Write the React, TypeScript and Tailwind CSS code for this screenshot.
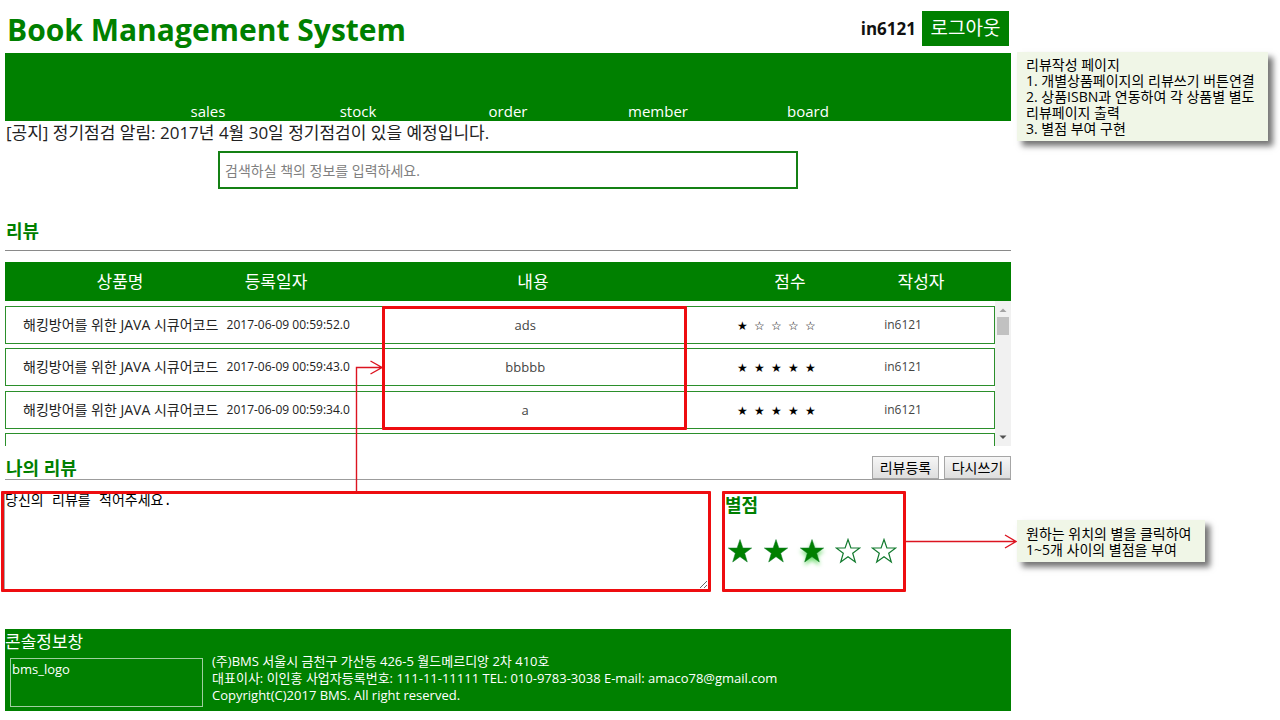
import { useState } from "react";
import type { ReactNode } from "react";

const menu = ["sales", "stock", "order", "member", "board"];
const columns = ["상품명", "등록일자", "내용", "점수", "작성자"];

type Review = { title: string; date: string; body: string; score: number; writer: string };

const reviews: Review[] = [
  { title: "해킹방어를 위한 JAVA 시큐어코드", date: "2017-06-09 00:59:52.0", body: "ads", score: 1, writer: "in6121" },
  { title: "해킹방어를 위한 JAVA 시큐어코드", date: "2017-06-09 00:59:43.0", body: "bbbbb", score: 5, writer: "in6121" },
  { title: "해킹방어를 위한 JAVA 시큐어코드", date: "2017-06-09 00:59:34.0", body: "a", score: 5, writer: "in6121" },
];

const filled = [1, 2, 3, 4, 5];

function Header() {
  return (
    <header className="flex h-[53px] items-start justify-between pr-[2px] pt-[11px]">
      <h1 className="pl-[2px] text-[30px] leading-[38px] font-bold text-[#008000]">Book Management System</h1>
      <div className="flex items-center gap-[6px]">
        <span className="text-[17px] font-bold text-[#111]">in6121</span>
        <button type="button" className="h-[35px] w-[87px] bg-[#008000] text-[19px] leading-[35px] text-white">
          로그아웃
        </button>
      </div>
    </header>
  );
}

function Menu() {
  return (
    <nav className="flex h-[68px] items-end justify-center bg-[#008000]">
      {menu.map((item) => (
        <a key={item} href={"#" + item} className="w-[150px] text-center text-[15px] leading-[20px] text-white">
          {item}
        </a>
      ))}
    </nav>
  );
}

function ScrollBar() {
  return (
    <div aria-hidden="true" className="absolute top-[39px] right-0 bottom-0 flex w-[16px] flex-col items-center bg-[#f1f1f1]">
      <svg width="8" height="16" viewBox="0 0 8 16" className="shrink-0">
        <path d="M0.5 11 4 7.5 7.5 11z" fill="#a3a3a3" />
      </svg>
      <div className="h-[18px] w-[12px] bg-[#c1c1c1]" />
      <svg width="8" height="16" viewBox="0 0 8 16" className="mt-auto shrink-0">
        <path d="M0.5 5.5h7L4 9z" fill="#505050" />
      </svg>
    </div>
  );
}

function ReviewTable() {
  return (
    <div className="relative mt-[11px]">
      <table className="block w-full">
        <thead className="block bg-[#008000]">
          <tr className="grid h-[39px] grid-cols-[160fr_152fr_362fr_152fr_110fr] items-center px-[35px]">
            {columns.map((name) => (
              <th key={name} className="text-center text-[17px] leading-[20px] font-normal text-white">
                {name}
              </th>
            ))}
          </tr>
        </thead>
        <tbody className="block h-[145px] overflow-hidden pt-[5px] pr-[16px]">
          {reviews.map((r) => (
            <tr
              key={r.date}
              className="grid h-[38px] grid-cols-[194fr_140fr_335fr_168fr_86fr] items-center border border-[#2b8f2b] pr-[48px] pl-[17px] text-[13px] leading-[18px] whitespace-nowrap text-[#222] odd:mb-[4px] even:mb-[5px]"
            >
              <td className="flex justify-center text-[14px]">{r.title}</td>
              <td className="flex justify-center text-[12px]">{r.date}</td>
              <td className="text-center text-[#444]">{r.body}</td>
              <td className="flex justify-center pt-[2px] text-[12px] text-black">
                {filled.map((n) => (
                  <span key={n} className="w-[17px] text-center font-['DejaVu_Sans',sans-serif]">
                    {n <= r.score ? "★" : "☆"}
                  </span>
                ))}
              </td>
              <td className="text-center text-[12px] text-[#444]">{r.writer}</td>
            </tr>
          ))}
          <tr className="grid h-[38px] border border-[#2b8f2b]">
            <td />
          </tr>
        </tbody>
      </table>
      <ScrollBar />
      <div className="pointer-events-none absolute top-[44px] left-[377px] h-[124px] w-[305px] rounded-[1px] border-3 border-[#ee0d10]" />
      <svg className="pointer-events-none absolute top-[98px] left-[350px]" width="28" height="134" viewBox="0 0 28 134" fill="none" stroke="#dc1420" strokeWidth="1.4" aria-hidden="true">
        <path d="M1.5 132V7.500H27M15.500 1 27 7.500 15.500 14" />
      </svg>
    </div>
  );
}

function Star({ on, glow }: { on: boolean; glow: boolean }) {
  return (
    <svg
      width="26"
      height="26"
      viewBox="0 0 26 26"
      aria-hidden="true"
      className={glow ? "drop-shadow-[0_3px_2px_#6fdc6f]" : ""}
    >
      <path
        d="M13 1.500 15.900 10H24.700L17.700 15.200 20.300 24 13 18.700 5.700 24 8.300 15.200 1.300 10H10.100Z"
        fill={on ? "#008000" : "none"}
        stroke="#127a2e"
        strokeWidth={on ? 0.5 : 1.2}
      />
    </svg>
  );
}

function Rating() {
  const [score, setScore] = useState(3);
  return (
    <section className="h-[101px] w-[184px] rounded-[1px] border-3 border-[#ee0d10]">
      <h2 className="text-[18px] leading-[22px] font-bold text-[#008000]">별점</h2>
      <div className="mt-[22px] flex gap-[10px] pl-[2px]">
        {filled.map((n) => (
          <button key={n} type="button" aria-label={n + "점"} onClick={() => setScore(n)} className="w-[26px] shrink-0">
            <Star on={n <= score} glow={n === score} />
          </button>
        ))}
      </div>
    </section>
  );
}

function GrayButton({ children }: { children: ReactNode }) {
  return (
    <button
      type="button"
      className="h-[23px] w-[67px] border border-[#a6a6a6] bg-linear-to-b from-[#f6f6f6] to-[#dedede] text-[14px] leading-[20px] text-black"
    >
      {children}
    </button>
  );
}

function MyReview() {
  return (
    <section>
      <div className="mt-[10px] flex h-[24px] items-start justify-between border-b border-[#9c9c9c]">
        <h2 className="pl-[1px] text-[18px] leading-[24px] font-bold text-[#008000]">
          <label htmlFor="my-review">나의 리뷰</label>
        </h2>
        <div className="flex gap-[5px]">
          <GrayButton>리뷰등록</GrayButton>
          <GrayButton>다시쓰기</GrayButton>
        </div>
      </div>
      <div className="-ml-[4px] mt-[11px] flex gap-[11px] pr-[105px]">
        <div className="h-[101px] flex-1 rounded-[1px] border-3 border-[#ee0d10]">
          <textarea
            id="my-review"
            defaultValue="당신의 리뷰를 적어주세요."
            className="block h-[95px] w-full resize border-l border-[#a9a9a9] font-['Liberation_Mono','Noto_Sans_CJK_KR',monospace] text-[14px] leading-[15px] text-black outline-none"
          />
        </div>
        <Rating />
      </div>
    </section>
  );
}

function Footer() {
  return (
    <footer className="mt-[37px] h-[82px] bg-[#008000] text-white">
      <p className="pt-[2px] text-[17px] leading-[22px]">콘솔정보창</p>
      <div className="flex gap-[9px] pt-[5px] pl-[5px]">
        <div className="h-[49px] w-[193px] shrink-0 border border-[#9fcf9f] pl-[1px] text-[13px] leading-[21px]">
          bms_logo
        </div>
        <address className="-mt-[5px] text-[13px] leading-[17px] whitespace-nowrap not-italic">
          (주)BMS 서울시 금천구 가산동 426-5 월드메르디앙 2차 410호
          <br />
          대표이사: 이인홍 사업자등록번호: 111-11-11111 TEL: 010-9783-3038 E-mail: amaco78@gmail.com
          <br />
          Copyright(C)2017 BMS. All right reserved.
        </address>
      </div>
    </footer>
  );
}

function Note({ children }: { children: ReactNode }) {
  return (
    <div className="bg-[#f0f6e7] px-[9px] text-[14px] leading-[16px] whitespace-nowrap text-black shadow-[5px_5px_6px_rgba(0,0,0,0.55)]">
      {children}
    </div>
  );
}

export default function App() {
  return (
    <div className="flex min-h-screen bg-white pl-[5px] font-['Open_Sans','Noto_Sans_CJK_KR',sans-serif]">
      <main className="min-w-0 flex-1">
        <Header />
        <Menu />
        <p className="pl-[1px] text-[17px] leading-[24px] text-[#222]">
          [공지] 정기점검 알림: 2017년 4월 30일 정기점검이 있을 예정입니다.
        </p>
        <div className="mt-[6px] flex justify-center">
          <input
            type="text"
            aria-label="도서 검색"
            placeholder="검색하실 책의 정보를 입력하세요."
            className="h-[38px] w-[580px] border-2 border-[#148014] px-[5px] text-[14px] outline-none placeholder:text-[#808080]"
          />
        </div>
        <h2 className="mt-[30px] border-b border-[#8a8a8a] pl-[1px] pb-[7px] text-[18px] leading-[24px] font-bold text-[#008000]">
          리뷰
        </h2>
        <ReviewTable />
        <MyReview />
        <Footer />
      </main>
      <aside className="flex w-[269px] shrink-0 flex-col items-start pt-[52px] pr-[12px] pl-[6px]">
        <div className="w-full">
          <Note>
            <div className="pt-[5px] pb-[4px]">
              리뷰작성 페이지
              <br />
              1. 개별상품페이지의 리뷰쓰기 버튼연결
              <br />
              2. 상품ISBN과 연동하여 각 상품별 별도
              <br />
              리뷰페이지 출력
              <br />
              3. 별점 부여 구현
            </div>
          </Note>
        </div>
        <div className="relative mt-[379px] w-[188px]">
          <Note>
            <div className="pt-[6px] pb-[4px]">
              원하는 위치의 별을 클릭하여
              <br />
              1~5개 사이의 별점을 부여
            </div>
          </Note>
          <svg className="pointer-events-none absolute top-[14px] right-full" width="111" height="16" viewBox="0 0 111 16" fill="none" stroke="#dc1420" strokeWidth="1.400" aria-hidden="true">
            <path d="M0 7.500H110M99 1 110 7.500 99 14" />
          </svg>
        </div>
      </aside>
    </div>
  );
}
